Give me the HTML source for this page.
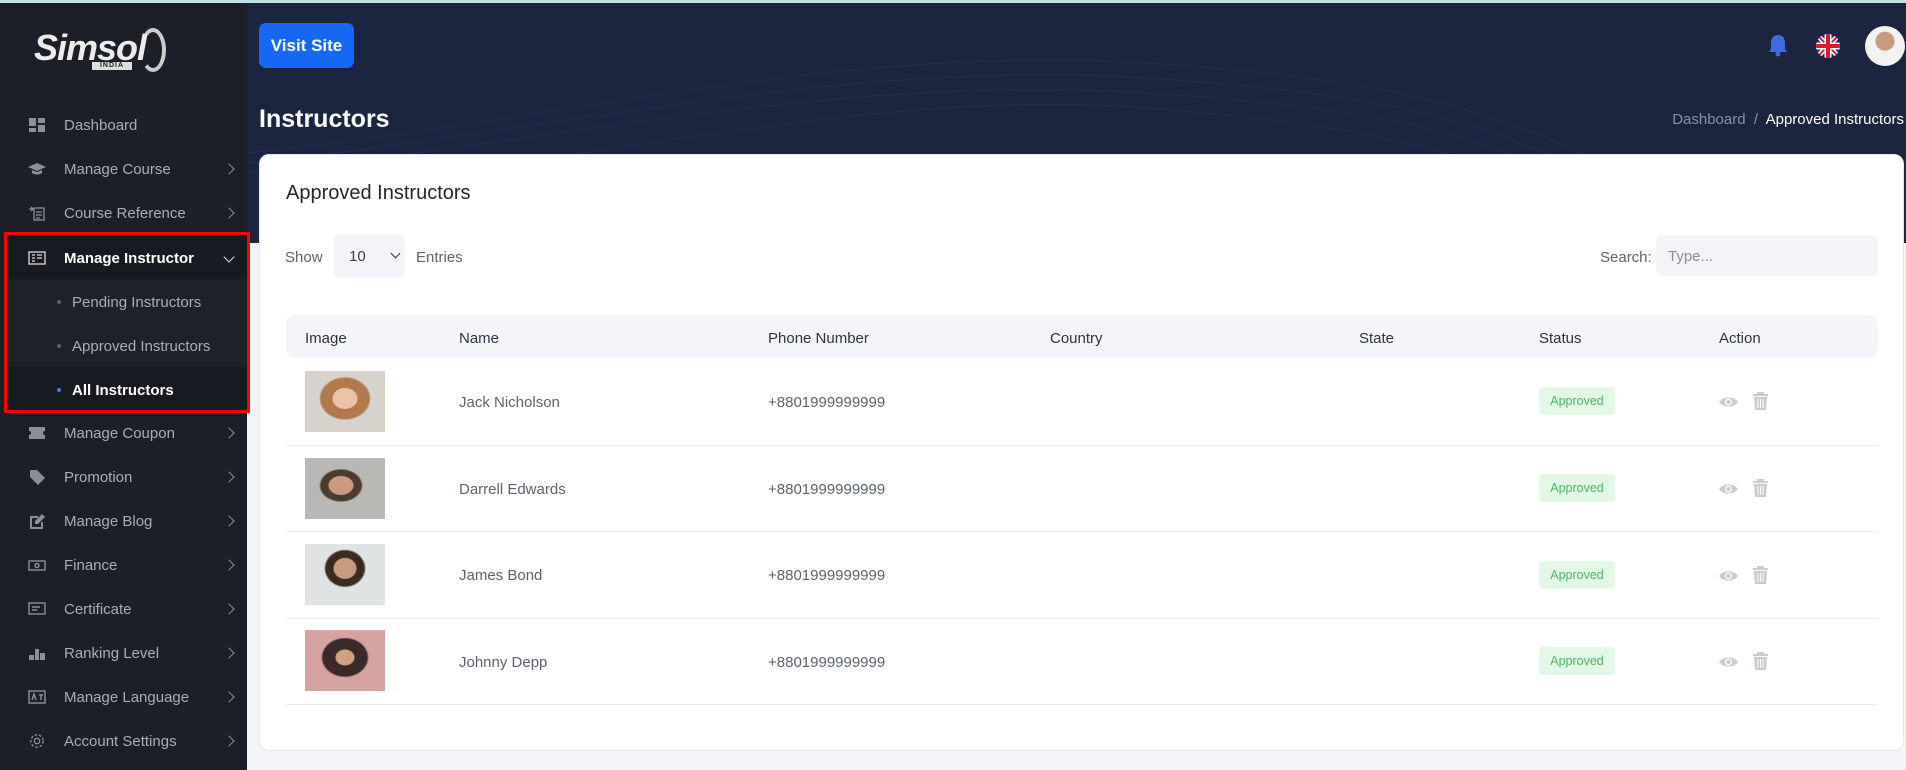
<!DOCTYPE html>
<html><head><meta charset="utf-8"><style>
*{box-sizing:border-box;margin:0;padding:0}
body{width:1906px;height:770px;overflow:hidden;background:#f3f4f7;font-family:"Liberation Sans",sans-serif;position:relative}
.a{position:absolute}
.sb{left:0;top:3px;width:247px;height:767px;background:#1c1f27}
.top{left:0;top:0;width:1906px;height:3px;background:#bfe3e3}
.hdr{left:247px;top:3px;width:1659px;height:240px;background:#1b2540;overflow:hidden}
.nav{left:0;width:247px;height:44px;color:#a9adb8;font-size:15px;display:flex;align-items:center}
.nav .ic{position:absolute;left:28px;width:18px;height:16px}
.nav .t{position:absolute;left:64px}
.nav .ch{position:absolute;left:225px;width:8px;height:8px;border-right:1.5px solid #8a8f9a;border-top:1.5px solid #8a8f9a;transform:rotate(45deg)}
.sub .t{left:72px}
.sub .dot{position:absolute;left:57px;width:4px;height:4px;border-radius:50%;background:#5b6070}
.card{left:259px;top:154px;width:1645px;height:597px;background:#fff;border-radius:10px;border:1px solid #e6e8ee}
.th{color:#2d3340;font-size:15px}
.td{color:#5c6270;font-size:15px}
.badge{width:76px;height:28px;background:#e3f7e6;color:#4cb862;font-size:12.5px;border-radius:4px;display:flex;align-items:center;justify-content:center}
.line{left:286px;width:1592px;height:1px;background:#e8eaee}
.ph{width:80px;height:61px}
</style></head><body>
<div class="a top"></div>
<div class="a sb"></div>
<div class="a hdr">
<svg width="1659" height="240" style="position:absolute;left:0;top:0" fill="none" stroke="#26345a" stroke-width="1" opacity=".7">
<path d="M0 150 C300 120 600 40 900 60 S1300 120 1500 240"/>
<path d="M0 160 C300 130 600 55 900 75 S1280 130 1470 240"/>
<path d="M0 170 C300 140 600 70 900 90 S1260 140 1440 240"/>
<path d="M100 180 C400 150 650 85 900 105 S1240 150 1410 240"/>
</svg>
</div>
<!-- logo -->
<div class="a" style="left:34px;top:27px;color:#ececec;font:italic 900 36px 'Liberation Sans',sans-serif;letter-spacing:-1px">Simsol</div>
<div class="a" style="left:92px;top:62px;width:40px;height:8px;background:#ddd;color:#1c1f27;font:bold 7px 'Liberation Sans';text-align:center;line-height:8px;letter-spacing:1px">INDIA</div>
<div class="a" style="left:140px;top:28px;width:26px;height:44px;border:4px solid #ccc;border-radius:50%;border-left-color:transparent"></div>
<!-- nav -->
<div class="a nav" style="top:103px"><svg class="ic" viewBox="0 0 18 16" fill="#8a8f9a"><rect x="1" y="1" width="7" height="8"/><rect x="10" y="1" width="7" height="5"/><rect x="1" y="11" width="7" height="4"/><rect x="10" y="8" width="7" height="7"/></svg><span class="t">Dashboard</span></div>
<div class="a nav" style="top:147px"><svg class="ic" viewBox="0 0 18 16" fill="#8a8f9a"><path d="M9 2L0 6l9 4 9-4zM4 9v3c2 2 8 2 10 0V9l-5 2z"/></svg><span class="t">Manage Course</span><span class="ch"></span></div>
<div class="a nav" style="top:191px"><svg class="ic" viewBox="0 0 18 16" fill="none" stroke="#8a8f9a" stroke-width="1.3"><rect x="6" y="3" width="10" height="12"/><path d="M8 7h6M8 10h6M8 13h4M1 4h4M3 2l2 2-2 2"/></svg><span class="t">Course Reference</span><span class="ch"></span></div>
<div class="a" style="left:5px;top:235px;width:244px;height:44px;background:#171a21"></div>
<div class="a" style="left:5px;top:279px;width:244px;height:88px;background:#1e2129"></div>
<div class="a" style="left:5px;top:367px;width:244px;height:44px;background:#171a21"></div>
<div class="a nav" style="top:236px;color:#fff;font-weight:bold"><svg class="ic" viewBox="0 0 18 16" fill="none" stroke="#ddd" stroke-width="1.3"><rect x="1" y="2" width="16" height="12"/><path d="M4 5h3M4 8h3M4 11h3M9 5h5M9 8h5"/></svg><span class="t">Manage Instructor</span><span class="ch" style="transform:rotate(135deg);top:17px;border-color:#ddd"></span></div>
<div class="a nav sub" style="top:280px"><span class="dot"></span><span class="t">Pending Instructors</span></div>
<div class="a nav sub" style="top:324px"><span class="dot"></span><span class="t">Approved Instructors</span></div>
<div class="a nav sub" style="top:368px;color:#fff;font-weight:bold"><span class="dot" style="background:#4a7cf6"></span><span class="t">All Instructors</span></div>
<div class="a" style="left:4px;top:232px;width:246px;height:181px;border:3px solid #f00"></div>
<div class="a nav" style="top:411px"><svg class="ic" viewBox="0 0 18 16" fill="#8a8f9a"><path d="M1 2h16v4a2 2 0 000 4v4H1v-4a2 2 0 000-4z"/></svg><span class="t">Manage Coupon</span><span class="ch"></span></div>
<div class="a nav" style="top:455px"><svg class="ic" viewBox="0 0 18 16" fill="#8a8f9a"><path d="M2 1h7l8 8-7 7-8-8z"/></svg><span class="t">Promotion</span><span class="ch"></span></div>
<div class="a nav" style="top:499px"><svg class="ic" viewBox="0 0 18 16" fill="#8a8f9a"><path d="M2 3h8v2H4v9h9V9h2v7H2zM14 1l3 3-7 7H7V8z"/></svg><span class="t">Manage Blog</span><span class="ch"></span></div>
<div class="a nav" style="top:543px"><svg class="ic" viewBox="0 0 18 16" fill="none" stroke="#8a8f9a" stroke-width="1.4"><rect x="1" y="4" width="16" height="9"/><circle cx="9" cy="8.5" r="2"/></svg><span class="t">Finance</span><span class="ch"></span></div>
<div class="a nav" style="top:587px"><svg class="ic" viewBox="0 0 18 16" fill="none" stroke="#8a8f9a" stroke-width="1.4"><rect x="1" y="2" width="16" height="11"/><path d="M4 6h8M4 9h5"/></svg><span class="t">Certificate</span><span class="ch"></span></div>
<div class="a nav" style="top:631px"><svg class="ic" viewBox="0 0 18 16" fill="#8a8f9a"><rect x="1" y="10" width="5" height="5"/><rect x="7" y="4" width="4" height="11"/><rect x="12" y="8" width="5" height="7"/></svg><span class="t">Ranking Level</span><span class="ch"></span></div>
<div class="a nav" style="top:675px"><svg class="ic" viewBox="0 0 18 16" fill="none" stroke="#8a8f9a" stroke-width="1.4"><rect x="1" y="2" width="16" height="12"/><path d="M4 11l2-6 2 6M11 6h4M13 6v5"/></svg><span class="t">Manage Language</span><span class="ch"></span></div>
<div class="a nav" style="top:719px"><svg class="ic" viewBox="0 0 18 18" fill="none" stroke="#8a8f9a" stroke-width="1.5"><circle cx="9" cy="9" r="3"/><circle cx="9" cy="9" r="7" stroke-dasharray="3 2"/></svg><span class="t">Account Settings</span><span class="ch"></span></div>
<!-- header content -->
<div class="a" style="left:259px;top:23px;width:95px;height:45px;background:#1569f5;border-radius:7px;color:#fff;font-weight:bold;font-size:17px;display:flex;align-items:center;justify-content:center">Visit Site</div>
<div class="a" style="left:259px;top:105px;color:#fff;font-weight:bold;font-size:25px">Instructors</div>
<div class="a" style="right:2px;top:111px;font-size:15px;color:#8a93a6">Dashboard &nbsp;/&nbsp; <span style="color:#fff">Approved Instructors</span></div>
<svg class="a" style="left:1767px;top:33px" width="22" height="25" viewBox="0 0 22 25"><path d="M11 2c-5 0-7 4-7 8v6l-2 3h18l-2-3v-6c0-4-2-8-7-8z" fill="#3d6dd8"/><circle cx="11" cy="21" r="2.5" fill="#3d6dd8"/></svg>
<svg class="a" style="left:1815px;top:33px" width="26" height="26" viewBox="0 0 26 26"><clipPath id="c"><circle cx="13" cy="13" r="12"/></clipPath><g clip-path="url(#c)"><rect width="26" height="26" fill="#1e2a80"/><path d="M0 0L26 26M26 0L0 26" stroke="#fff" stroke-width="5"/><path d="M0 0L26 26M26 0L0 26" stroke="#e0182d" stroke-width="2"/><path d="M13 0v26M0 13h26" stroke="#fff" stroke-width="7"/><path d="M13 0v26M0 13h26" stroke="#e0182d" stroke-width="4"/></g></svg>
<div class="a" style="left:1865px;top:26px;width:40px;height:40px;border-radius:50%;background:radial-gradient(circle at 50% 38%,#c99a7e 0 9px,#f2f2f2 10px)"></div>
<!-- card -->
<div class="a card"></div>
<div class="a" style="left:286px;top:182px;font-size:20px;color:#1f2530">Approved Instructors</div>
<div class="a td" style="left:285px;top:249px">Show</div>
<div class="a" style="left:334px;top:234px;width:71px;height:44px;background:#f3f4f7;border-radius:6px;font-size:15px;color:#3a3f4a;padding:14px 0 0 15px">10</div>
<div class="a" style="left:392px;top:250px;width:7px;height:7px;border-right:1.5px solid #333;border-bottom:1.5px solid #333;transform:rotate(45deg)"></div>
<div class="a td" style="left:416px;top:249px">Entries</div>
<div class="a td" style="left:1600px;top:249px">Search:</div>
<div class="a" style="left:1656px;top:235px;width:222px;height:41px;background:#f3f4f7;border-radius:6px;font-size:15px;color:#8a8f9a;padding:13px 0 0 12px">Type...</div>
<div class="a" style="left:286px;top:315px;width:1592px;height:43px;background:#f4f5f8;border-radius:8px"></div>
<div class="a th" style="left:305px;top:330px">Image</div>
<div class="a th" style="left:459px;top:330px">Name</div>
<div class="a th" style="left:768px;top:330px">Phone Number</div>
<div class="a th" style="left:1050px;top:330px">Country</div>
<div class="a th" style="left:1359px;top:330px">State</div>
<div class="a th" style="left:1539px;top:330px">Status</div>
<div class="a th" style="left:1719px;top:330px">Action</div>

<div class="a ph" style="left:305px;top:371px;background:radial-gradient(ellipse at 50% 45%,#e8c3a8 0 12px,#b07a4c 13px 24px,#d8d2cc 26px)"></div>
<div class="a ph" style="left:305px;top:458px;background:radial-gradient(ellipse at 45% 45%,#c99a7e 0 12px,#4a3a30 13px 20px,#b8b8b4 22px)"></div>
<div class="a ph" style="left:305px;top:544px;background:radial-gradient(ellipse at 50% 40%,#c99a7e 0 11px,#3a2a20 12px 19px,#dfe3e3 21px)"></div>
<div class="a ph" style="left:305px;top:630px;background:radial-gradient(ellipse at 50% 45%,#d0a080 0 9px,#3a2a2a 10px 22px,#d7a3a0 24px)"></div>

<div class="a td" style="left:459px;top:394px">Jack Nicholson</div>
<div class="a td" style="left:459px;top:481px">Darrell Edwards</div>
<div class="a td" style="left:459px;top:567px">James Bond</div>
<div class="a td" style="left:459px;top:654px">Johnny Depp</div>
<div class="a td" style="left:768px;top:394px">+8801999999999</div>
<div class="a td" style="left:768px;top:481px">+8801999999999</div>
<div class="a td" style="left:768px;top:567px">+8801999999999</div>
<div class="a td" style="left:768px;top:654px">+8801999999999</div>
<div class="a badge" style="left:1539px;top:387px">Approved</div>
<div class="a badge" style="left:1539px;top:474px">Approved</div>
<div class="a badge" style="left:1539px;top:561px">Approved</div>
<div class="a badge" style="left:1539px;top:647px">Approved</div>

<svg width="0" height="0" style="position:absolute"><defs>
<g id="eye"><path d="M0 7C4 1 15 1 19 7 15 13 4 13 0 7z" fill="#c9ccd2"/><circle cx="9.5" cy="7" r="3.5" fill="#fff"/><circle cx="9.5" cy="7" r="2.2" fill="#c9ccd2"/></g>
<g id="tr" fill="#c9ccd2"><rect x="4" y="0" width="7" height="2"/><rect x="0" y="2" width="15" height="2"/><path d="M1 5h13l-1 13H2z"/><path d="M5 7v9M7.5 7v9M10 7v9" stroke="#fff" stroke-width="1"/></g>
</defs></svg>
<svg class="a" style="left:1719px;top:395px" width="19" height="14"><use href="#eye"/></svg>
<svg class="a" style="left:1753px;top:392px" width="15" height="18"><use href="#tr"/></svg>
<svg class="a" style="left:1719px;top:482px" width="19" height="14"><use href="#eye"/></svg>
<svg class="a" style="left:1753px;top:479px" width="15" height="18"><use href="#tr"/></svg>
<svg class="a" style="left:1719px;top:569px" width="19" height="14"><use href="#eye"/></svg>
<svg class="a" style="left:1753px;top:566px" width="15" height="18"><use href="#tr"/></svg>
<svg class="a" style="left:1719px;top:655px" width="19" height="14"><use href="#eye"/></svg>
<svg class="a" style="left:1753px;top:652px" width="15" height="18"><use href="#tr"/></svg>

<div class="a line" style="top:445px"></div>
<div class="a line" style="top:531px"></div>
<div class="a line" style="top:618px"></div>
<div class="a line" style="top:704px"></div>
</body></html>
